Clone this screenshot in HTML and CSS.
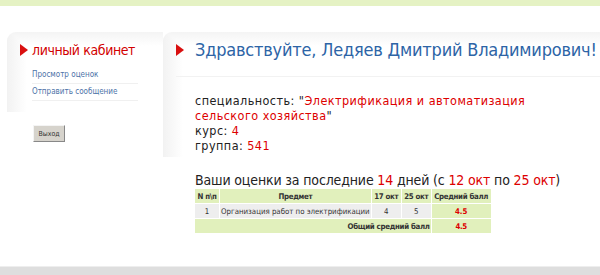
FILE: index.html
```html
<!DOCTYPE html>
<html lang="ru">
<head>
    <meta charset="UTF-8">
    <title>Личный кабинет</title>
    <link rel="stylesheet" href="styles.css">
</head>
<body>
    <div class="top-bar"></div>

    <div class="page">
        <div class="sidebar">
            <div class="panel side-panel">
                <h2 class="panel-title red"><span class="arrow"></span>личный кабинет</h2>
                <ul class="menu">
                    <li><a href="#">Просмотр оценок</a></li>
                    <li><a href="#">Отправить сообщение</a></li>
                </ul>
            </div>
            <button class="logout" type="button">Выход</button>
        </div>

        <div class="content">
            <div class="panel main-panel">
                <h1 class="panel-title blue"><span class="arrow"></span>Здравствуйте, Ледяев Дмитрий Владимирович!</h1>
                <div class="info">
                    <p>специальность: "<span class="val">Электрификация и автоматизация</span><br><span class="val">сельского хозяйства</span>"</p>
                    <p>курс: <span class="val">4</span></p>
                    <p>группа: <span class="val">541</span></p>
                </div>
            </div>

            <h3 class="marks-title">Ваши оценки за последние <span class="val">14</span> дней (с <span class="val">12 окт</span> по <span class="val">25 окт</span>)</h3>
            <table class="marks">
                <tr class="head">
                    <th class="c-num">N п\п</th>
                    <th class="c-subj">Предмет</th>
                    <th class="c-day">17 окт</th>
                    <th class="c-day">25 окт</th>
                    <th class="c-avg">Средний балл</th>
                </tr>
                <tr class="row">
                    <td>1</td>
                    <td class="subj">Организация работ по электрификации</td>
                    <td>4</td>
                    <td>5</td>
                    <td class="avg">4.5</td>
                </tr>
                <tr class="total">
                    <td colspan="4" class="total-label">Общий средний балл</td>
                    <td class="avg">4.5</td>
                </tr>
            </table>
        </div>
    </div>

    <div class="bottom-bar"></div>
</body>
</html>
```

FILE: styles.css
```css
body {
    font-family: "DejaVu Sans Condensed", "DejaVu Sans", sans-serif;
    background-color: #fff;
    color: #333;
    margin: 0;
    padding: 0;
    width: 600px;
    height: 275px;
    overflow: hidden;
    position: relative;
}

.top-bar {
    height: 6px;
    background-color: #e5f2c4;
}

.bottom-bar {
    position: absolute;
    left: 0;
    right: 0;
    top: 266px;
    height: 9px;
    background-color: #dedede;
    border-top: 1px solid #eee;
}

.page {
    display: flex;
    padding-top: 26px;
    padding-left: 7px;
}

.sidebar {
    width: 156px;
    flex-shrink: 0;
}

.panel {
    border-radius: 9px 0 0 0;
    background: linear-gradient(to bottom, #f4f4f4 0, #fff 14px),
                linear-gradient(to right, #f2f2f2 0, #fff 20px);
    background-blend-mode: darken;
}

.side-panel {
    height: 80px;
    padding: 10px 0 0 13px;
    box-sizing: border-box;
}

.panel-title {
    display: flex;
    align-items: center;
    margin: 0;
    font-weight: normal;
    white-space: nowrap;
}

.arrow {
    width: 0;
    height: 0;
    border-top: 6px solid transparent;
    border-bottom: 6px solid transparent;
    border-left: 8px solid #d90f0f;
    margin-right: 4px;
}

.red {
    color: #d20000;
    font-size: 14px;
    letter-spacing: -0.4px;
}

.menu {
    list-style: none;
    margin: 9px 0 0 12px;
    padding: 0;
    width: 106px;
}

.menu li {
    font-size: 8px;
    padding: 3px 0;
    border-bottom: 1px solid #f0f0f0;
    height: 10px;
}

.menu a {
    color: #4d73a8;
    text-decoration: none;
}

.logout {
    margin: 13px 0 0 26px;
    font-family: "DejaVu Sans Condensed", sans-serif;
    font-size: 7px;
    color: #333;
    background-color: #d6d3cc;
    border: 1px solid;
    border-color: #f4f4f4 #888 #888 #f4f4f4;
    width: 32px;
    height: 17px;
    padding: 0;
}

.content {
    flex: 1;
    min-width: 0;
}

.main-panel {
    height: 125px;
    padding: 7px 0 0 13px;
    box-sizing: border-box;
}

.blue {
    color: #2d64a6;
    font-size: 18px;
    letter-spacing: -0.2px;
    line-height: 22px;
    padding-bottom: 15px;
    border-bottom: 1px solid #f2f2f2;
}

.blue .arrow {
    margin-right: 11px;
}

.info {
    padding: 16px 0 0 19px;
    font-size: 12.5px;
    letter-spacing: 0.45px;
    line-height: 15px;
    color: #222;
    white-space: nowrap;
}

.info p {
    margin: 0;
}

.val {
    color: #d00;
}

.marks-title {
    margin: 15px 0 0 32px;
    font-weight: normal;
    font-size: 14px;
    letter-spacing: -0.15px;
    line-height: 16px;
    color: #222;
    white-space: nowrap;
}

.marks {
    margin-left: 31px;
    border-collapse: separate;
    border-spacing: 1px;
    font-size: 7.8px;
    color: #333;
    white-space: nowrap;
}

.marks th,
.marks td {
    height: 14px;
    padding: 0 1px;
    text-align: center;
}

.marks th,
.marks .total td {
    font-size: 7.8px;
    letter-spacing: -0.3px;
}

.marks .head th {
    background-color: #e1f0bc;
}

.c-num { width: 22px; }
.c-subj { width: 147px; }
.c-day { width: 27px; }
.c-avg { width: 57px; }

.marks .row td {
    background-color: #eeeeee;
}

.marks .row .subj {
    text-align: left;
}

.marks td.avg {
    background-color: #e1f0bc;
    color: #d00;
    font-weight: bold;
}

.marks .total td {
    background-color: #e1f0bc;
}

.marks .total-label {
    text-align: right;
    font-weight: bold;
}
```
